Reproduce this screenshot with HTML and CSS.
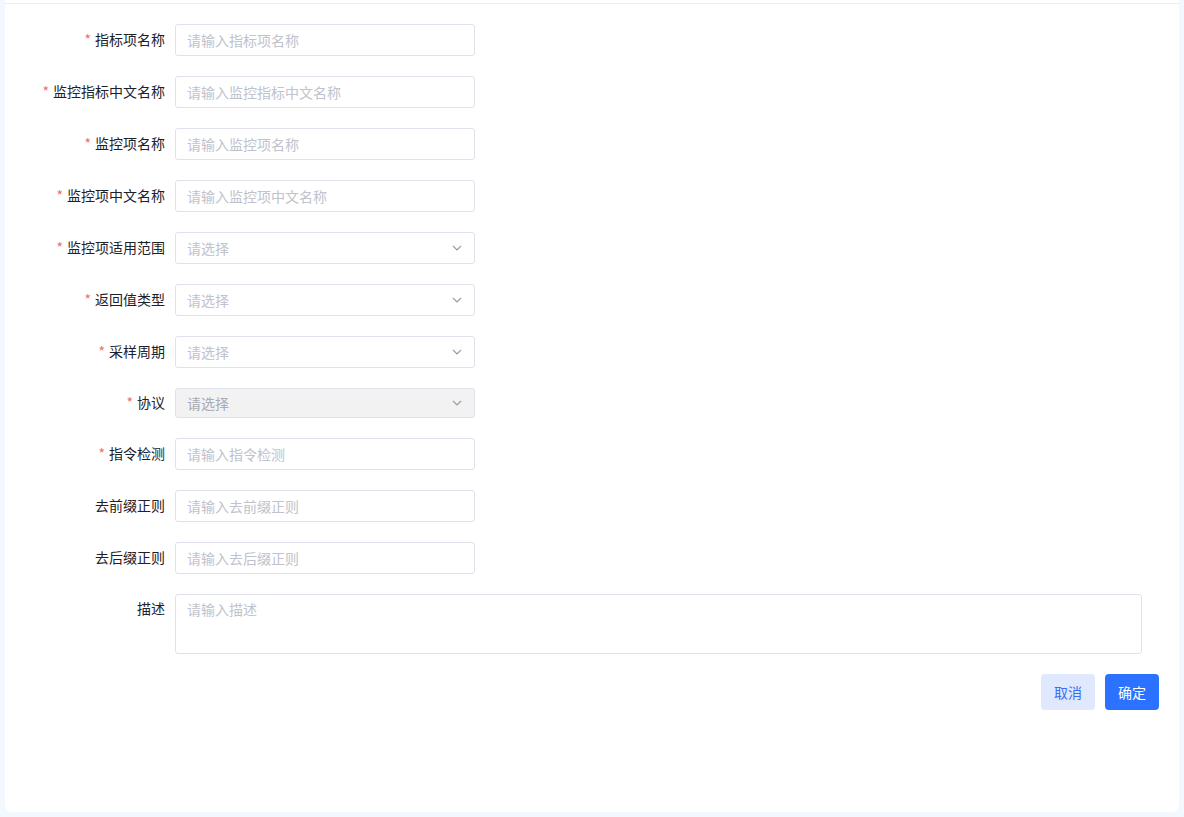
FILE: index.html
```html
<!DOCTYPE html>
<html lang="zh">
<head>
<meta charset="utf-8">
<link rel="stylesheet" href="styles.css">
</head>
<body>
<div class="card">
  <div class="topline"></div>
  <form class="form">
    <div class="row"><label class="label req">指标项名称</label><div class="input"><span class="ph">请输入指标项名称</span></div></div>
    <div class="row"><label class="label req">监控指标中文名称</label><div class="input"><span class="ph">请输入监控指标中文名称</span></div></div>
    <div class="row"><label class="label req">监控项名称</label><div class="input"><span class="ph">请输入监控项名称</span></div></div>
    <div class="row"><label class="label req">监控项中文名称</label><div class="input"><span class="ph">请输入监控项中文名称</span></div></div>
    <div class="row"><label class="label req">监控项适用范围</label><div class="input select"><span class="ph">请选择</span><svg class="arrow" viewBox="0 0 10 6" width="10" height="6"><path d="M1 1l4 4 4-4" fill="none" stroke="#9a9ca8" stroke-width="1.2"/></svg></div></div>
    <div class="row"><label class="label req">返回值类型</label><div class="input select"><span class="ph">请选择</span><svg class="arrow" viewBox="0 0 10 6" width="10" height="6"><path d="M1 1l4 4 4-4" fill="none" stroke="#9a9ca8" stroke-width="1.2"/></svg></div></div>
    <div class="row"><label class="label req">采样周期</label><div class="input select"><span class="ph">请选择</span><svg class="arrow" viewBox="0 0 10 6" width="10" height="6"><path d="M1 1l4 4 4-4" fill="none" stroke="#9a9ca8" stroke-width="1.2"/></svg></div></div>
    <div class="row"><label class="label req">协议</label><div class="input select disabled"><span class="ph dis">请选择</span><svg class="arrow" viewBox="0 0 10 6" width="10" height="6"><path d="M1 1l4 4 4-4" fill="none" stroke="#9a9ca8" stroke-width="1.2"/></svg></div></div>
    <div class="row"><label class="label req">指令检测</label><div class="input"><span class="ph">请输入指令检测</span></div></div>
    <div class="row"><label class="label">去前缀正则</label><div class="input"><span class="ph">请输入去前缀正则</span></div></div>
    <div class="row"><label class="label">去后缀正则</label><div class="input"><span class="ph">请输入去后缀正则</span></div></div>
    <div class="row"><label class="label label-top">描述</label><div class="textarea"><span class="ph">请输入描述</span></div></div>
    <div class="actions">
      <button type="button" class="btn btn-cancel">取消</button>
      <button type="button" class="btn btn-ok">确定</button>
    </div>
  </form>
</div>
</body>
</html>
```
FILE: styles.css
```css
* { box-sizing: border-box; }
html, body { margin: 0; padding: 0; }
body {
  background: #f3f7fe;
  font-family: "Noto Sans CJK SC", "Noto Sans", sans-serif;
  font-size: 14px;
  color: #1d2129;
  width: 1184px;
  height: 817px;
  overflow: hidden;
}
.card {
  margin: 0 5px;
  height: 812px;
  background: #fff;
  border-radius: 0 0 6px 6px;
  padding-top: 3px;
}
.topline {
  height: 1px;
  background: #eceef3;
}
.form {
  padding-top: 20px;
}
.row {
  display: flex;
  align-items: center;
  margin-bottom: 20px;
}
.label {
  width: 170px;
  text-align: right;
  padding-right: 10px;
  line-height: 18px;
  padding-bottom: 2px;
  color: #1d2129;
  flex-shrink: 0;
}
.label.req::before {
  content: "*";
  color: #f56c6c;
  margin-right: 4px;
}
.label-top { align-self: flex-start; padding-top: 5px; }
.input {
  width: 300px;
  height: 32px;
  border: 1px solid #e0e1ea;
  border-radius: 3px;
  display: flex;
  align-items: center;
  padding: 0 11px 1px;
  background: #fff;
}
.select { justify-content: space-between; padding-right: 12px; }
.disabled {
  height: 30px;
  background: #f2f2f3;
}
.ph { color: #c0c2cc; line-height: 20px; }
.ph.dis { color: #a8aab4; }
.arrow { display: block; }
.textarea {
  width: 967px;
  height: 60px;
  border: 1px solid #e0e1ea;
  border-radius: 3px;
  padding: 4px 11px;
}
.actions {
  display: flex;
  justify-content: flex-end;
  gap: 10px;
  padding-right: 20px;
}
.btn {
  height: 36px;
  width: 54px;
  border: none;
  border-radius: 4px;
  font-family: inherit;
  font-size: 14px;
  padding: 0;
  cursor: pointer;
}
.btn-cancel { background: #dfe8fd; color: #3a6ff2; }
.btn-ok { background: #2a72ff; color: #fff; }
```
